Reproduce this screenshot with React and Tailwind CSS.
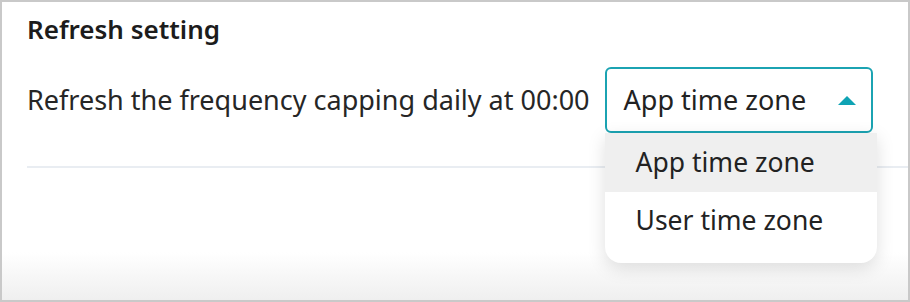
import React from "react";

export default function App() {
  return (
    <div
      className="relative w-[910px] h-[302px] overflow-hidden border-2 border-[#c9c9c9] bg-linear-to-b from-white from-[84%] to-[#efefef] text-[#222]"
      style={{ fontFamily: '"Noto Sans", sans-serif' }}
    >
      <div className="pl-[25px] pt-[9px]">
        <h2 className="text-[26px] font-semibold leading-[36px] text-[#1c1c1c]">Refresh setting</h2>
        <div className="mt-[20px] flex items-center gap-[15px]">
          <span className="text-[27px] leading-[36px] text-[#262626]">
            Refresh the frequency capping daily at 00:00
          </span>
          <div className="relative">
            <div className="flex h-[66px] w-[268px] items-center justify-between rounded-[6px] border-2 border-[#1ba3b2] bg-white pl-[17px] pr-[15px]">
              <span className="text-[27px] leading-[36px] text-[#222]">App time zone</span>
              <svg width="18" height="9" viewBox="0 0 18 9">
                <path d="M0 9 L9 0 L18 9 Z" fill="#0fa3b4" />
              </svg>
            </div>
            <div className="absolute left-0 top-[66px] z-10 w-[272px] overflow-hidden rounded-b-[16px] bg-white pb-[13px] shadow-[0_5px_18px_rgba(0,0,0,0.13)]">
              <div className="flex h-[59px] items-center bg-[#efefef] pl-[31px] text-[26.5px] text-[#222]">App time zone</div>
              <div className="flex h-[58px] items-center pl-[31px] text-[26.5px] text-[#222]">User time zone</div>
            </div>
          </div>
        </div>
        <div className="mt-[33px] h-[2px] bg-[#e9edf2]" />
      </div>
    </div>
  );
}
